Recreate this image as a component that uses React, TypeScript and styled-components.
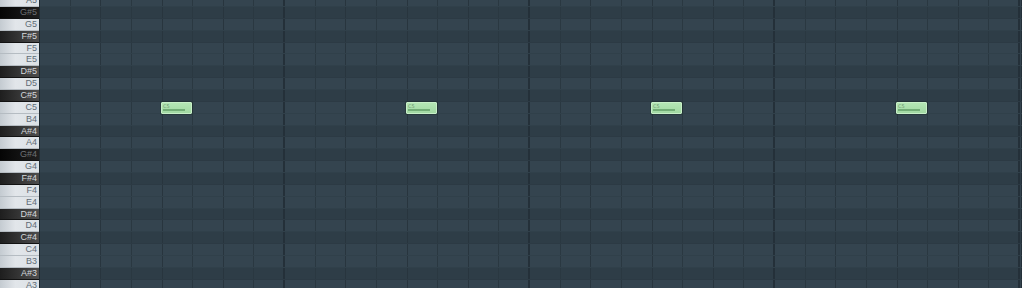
import React from "react";
import styled, { createGlobalStyle } from "styled-components";

const ROW_H = 11.86;
const STEP = 30.625;
const BAR = 245;

const Global = createGlobalStyle`
  html, body { margin: 0; padding: 0; background: #2f3e48; }
  body { width: 1022px; height: 288px; overflow: hidden; font-family: "Liberation Sans", Arial, sans-serif; }
`;

const Roll = styled.div`
  display: flex;
  width: 1022px;
  height: 288px;
  overflow: hidden;
  background: #2f3e48;
`;

const Keys = styled.div`
  display: flex;
  flex-direction: column;
  width: 39px;
  flex: none;
  margin-top: -4.86px;
  box-shadow: 1px 0 0 #1e2a31;
  z-index: 1;
`;

type KeyKind = "white" | "black" | "dim";

const Key = styled.div<{ $kind: KeyKind }>`
  height: ${ROW_H}px;
  flex: none;
  box-sizing: border-box;
  display: flex;
  align-items: center;
  justify-content: flex-end;
  padding-right: 2px;
  font-size: 9px;
  line-height: 1;
  background: ${(p) =>
    p.$kind === "white"
      ? "linear-gradient(90deg, #c4cbd1 0%, #e2e6ea 40%, #dce1e5 100%)"
      : p.$kind === "black"
      ? "linear-gradient(90deg, #1e1e1e 0%, #333 45%, #4d4d4d 100%)"
      : "linear-gradient(90deg, #050505 0%, #141414 60%, #1f1f1f 100%)"};
  color: ${(p) =>
    p.$kind === "white" ? "#5f6c76" : p.$kind === "black" ? "#d4d8db" : "#6d7073"};
  border-bottom: 1px solid
    ${(p) => (p.$kind === "white" ? "#b5bcc2" : "#121212")};
`;

const Grid = styled.div`
  position: relative;
  flex: 1;
  height: 288px;
  overflow: hidden;
`;

const Rows = styled.div`
  display: flex;
  flex-direction: column;
  margin-top: -4.86px;
`;

const Row = styled.div<{ $dark: boolean }>`
  height: ${ROW_H}px;
  flex: none;
  box-sizing: border-box;
  background-color: ${(p) => (p.$dark ? "#2e3d47" : "#34444f")};
  background-image:
    repeating-linear-gradient(90deg, #243039 0px, #243039 2px, transparent 2px, transparent ${BAR}px),
    repeating-linear-gradient(90deg, #28353e 0px, #28353e 1px, transparent 1px, transparent ${STEP * 2}px),
    repeating-linear-gradient(90deg, #2a3841 0px, #2a3841 1px, transparent 1px, transparent ${STEP}px);
  background-position: -1px 0, 0 0, 0 0;
  border-bottom: 1px solid ${(p) => (p.$dark ? "#2c3a44" : "#30404a")};
`;

const Note = styled.div`
  position: absolute;
  box-sizing: border-box;
  width: 31px;
  height: 12px;
  background: linear-gradient(180deg, #b4e6b4 0%, #a2d9a3 100%);
  border: 1px solid #c8efc8;
  border-radius: 1px;
  box-shadow: 0 0 0 1px rgba(20, 40, 30, 0.35);
`;

const NoteLabel = styled.span`
  position: absolute;
  left: 1px;
  top: 0px;
  font-size: 5px;
  line-height: 6px;
  color: #6f9a72;
  font-family: "DejaVu Sans", sans-serif;
`;

const NoteBar = styled.span`
  position: absolute;
  left: 1px;
  right: 6px;
  bottom: 2px;
  height: 2px;
  background: #72ad76;
`;

const names = ["A", "G#", "G", "F#", "F", "E", "D#", "D", "C#", "C", "B", "A#"];

type KeyRow = { label: string; kind: KeyKind; dark: boolean };

const buildRows = (): KeyRow[] => {
  const rows: KeyRow[] = [];
  let octave = 5;
  for (let i = 0; i < 25; i++) {
    const n = names[i % 12];
    const label = `${n}${octave}`;
    const black = n.includes("#");
    const kind: KeyKind = !black ? "white" : n === "G#" ? "dim" : "black";
    rows.push({ label, kind, dark: black });
    if (n === "C") octave -= 1;
  }
  return rows;
};

const rows = buildRows();
const noteRow = rows.findIndex((r) => r.label === "C5");

export default function App() {
  return (
    <>
      <Global />
      <Roll>
        <Keys>
          {rows.map((r) => (
            <Key key={r.label} $kind={r.kind}>
              {r.label}
            </Key>
          ))}
        </Keys>
        <Grid>
          <Rows>
            {rows.map((r) => (
              <Row key={r.label} $dark={r.dark} />
            ))}
          </Rows>
          {[0, 1, 2, 3].map((b) => (
            <Note
              key={b}
              style={{
                left: Math.round(BAR * b + BAR / 2 - 0.5),
                top: Math.round(-4.86 + noteRow * ROW_H),
              }}
            >
              <NoteLabel>C5</NoteLabel>
              <NoteBar />
            </Note>
          ))}
        </Grid>
      </Roll>
    </>
  );
}
